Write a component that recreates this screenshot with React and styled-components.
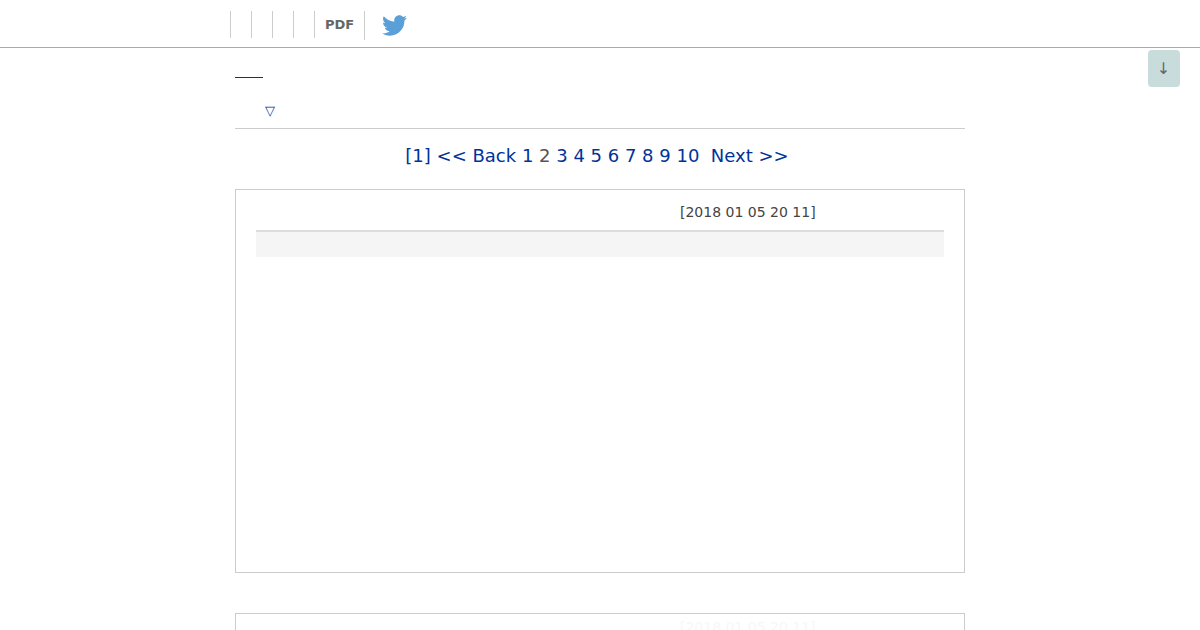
import React from 'react';
import styled, { createGlobalStyle } from 'styled-components';
import { FaTwitter } from 'react-icons/fa';

const Global = createGlobalStyle`
  html, body { margin: 0; padding: 0; background: #fff; height: 630px; overflow: hidden; }
  body { font-family: "DejaVu Sans", sans-serif; color: #444; }
`;
const Header = styled.header`
  height: 36px;
  border-bottom: 1px solid #aaa;
  display: flex;
  align-items: flex-start;
  padding: 11px 0 0 230px;
`;
const NavItem = styled.a`
  height: 27px;
  min-width: 20px;
  border-left: 1px solid #ccc;
  display: flex;
  align-items: center;
  justify-content: center;
  font-size: 13px;
  font-weight: 700;
  color: #666;
  padding: ${p => (p.$wide ? '0 10px' : '0')};
`;
const TwitterLink = styled.a`
  height: 29px;
  border-left: 1px solid #ccc;
  padding-left: 17px;
  display: flex;
  align-items: center;
  color: #5a9fd8;
  font-size: 25px;
`;
const ScrollButton = styled.button`
  position: fixed;
  top: 50px;
  right: 20px;
  width: 32px;
  height: 37px;
  border: 0;
  border-radius: 4px;
  background: #c9dcdc;
  color: #666;
  font: 16px "DejaVu Sans", sans-serif;
  padding: 0 1px 0 0;
`;
const Main = styled.main`
  width: 730px;
  margin: 0 auto;
`;
const TitleLink = styled.a`
  display: block;
  width: 28px;
  height: 1px;
  background: #003399;
  margin-top: 29px;
`;
const FilterRow = styled.div`
  height: 51px;
  box-sizing: border-box;
  border-bottom: 1px solid #ccc;
  padding: 23px 0 0 30px;
  color: #003399;
  font-size: 13px;
  line-height: 20px;
`;
const Pager = styled.nav`
  display: flex;
  justify-content: center;
  font-size: 18px;
  line-height: 24px;
  color: #003399;
  margin-top: 15px;
  padding-right: 6px;
  white-space: pre;
`;
const Current = styled.span`
  color: #555;
`;
const Card = styled.article`
  box-sizing: border-box;
  width: 730px;
  height: 384px;
  border: 1px solid #ccc;
  padding: ${p => (p.$first ? '12px' : '3px')} 20px 0;
  margin-top: ${p => (p.$first ? '21px' : '40px')};
`;
const DateLine = styled.div`
  font-size: 14px;
  line-height: 20px;
  padding-left: 424px;
  color: ${p => (p.$faint ? '#f7f7f7' : '#444')};
`;
const Band = styled.div`
  height: 25px;
  margin-top: 8px;
  background: #f5f5f5;
  border-top: 2px solid #ddd;
`;

export default function App() {
  return (
    <>
      <Global />
      <Header>
        <NavItem /><NavItem /><NavItem /><NavItem />
        <NavItem $wide>PDF</NavItem>
        <TwitterLink><FaTwitter /></TwitterLink>
      </Header>
      <ScrollButton>↓</ScrollButton>
      <Main>
        <TitleLink />
        <FilterRow>▽</FilterRow>
        <Pager>
          [1] {'<<'} Back 1 <Current>2</Current> 3 4 5 6 7 8 9 10  Next {'>>'}
        </Pager>
        <Card $first>
          <DateLine>[2018 01 05 20 11]</DateLine>
          <Band />
        </Card>
        <Card>
          <DateLine $faint>[2018 01 05 20 11]</DateLine>
        </Card>
      </Main>
    </>
  );
}
